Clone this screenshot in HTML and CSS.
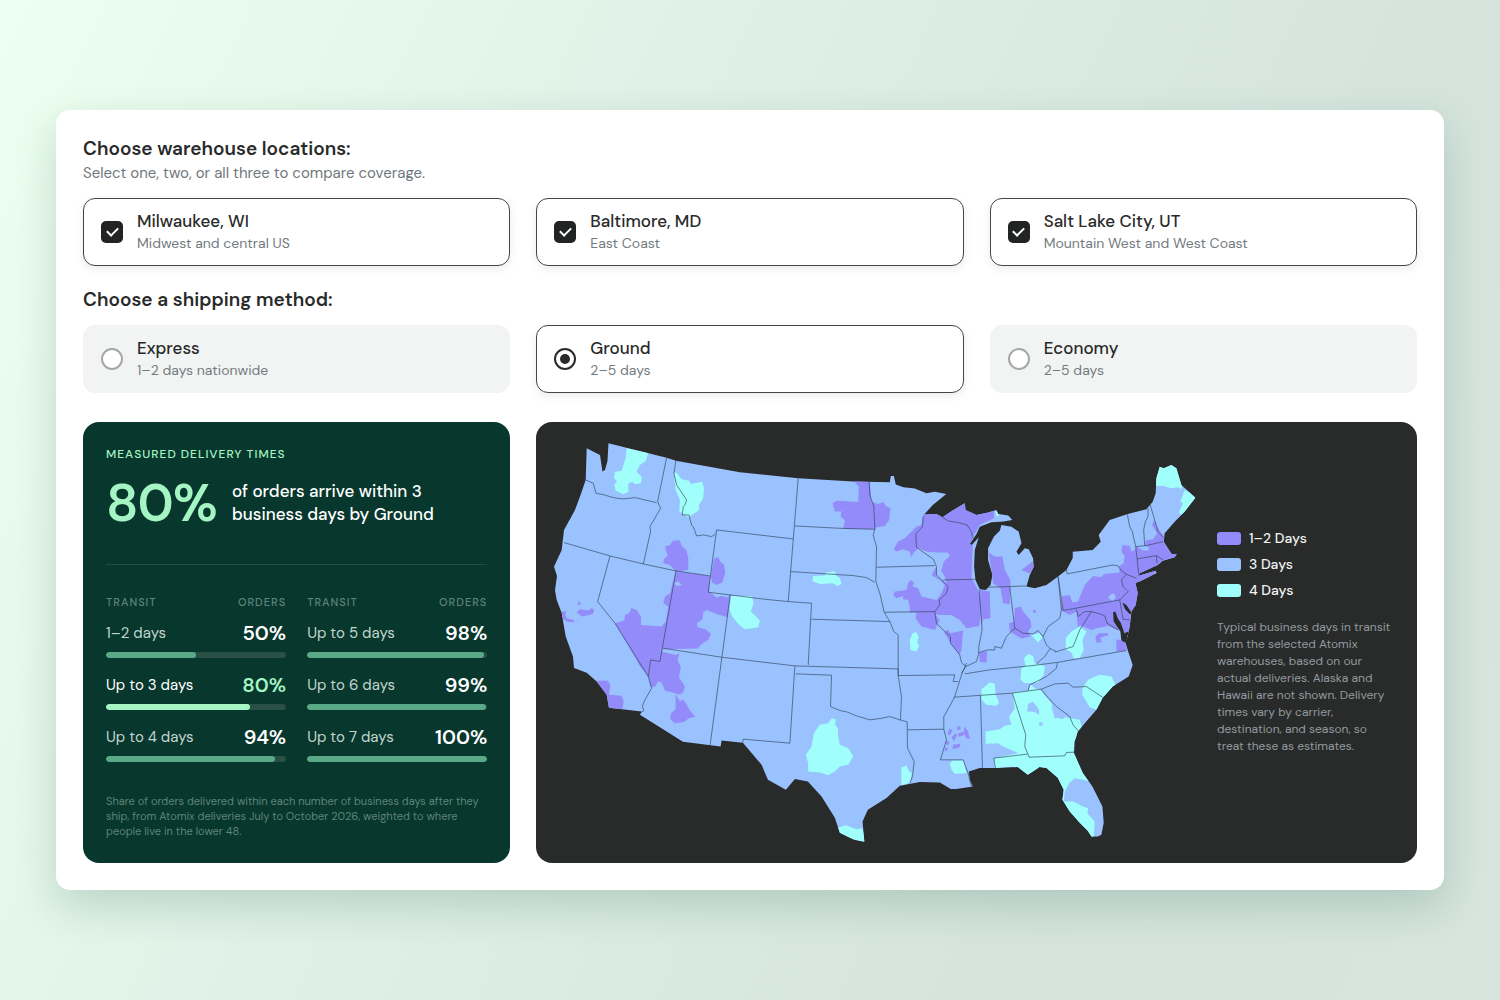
FILE: index.html
```html
<!DOCTYPE html>
<html lang="en">
<head>
<meta charset="utf-8">
<meta name="viewport" content="width=device-width, initial-scale=1">
<title>Delivery coverage</title>
<link rel="stylesheet" href="styles.css">
</head>
<body>
<main class="card">
  <fieldset class="group">
    <legend class="heading">Choose warehouse locations:</legend>
    <p class="hint">Select one, two, or all three to compare coverage.</p>
    <div class="options">
      <label class="option"><input class="control check" type="checkbox" checked><span class="option-text"><span class="name">Milwaukee, WI</span><span class="note">Midwest and central US</span></span></label>
      <label class="option"><input class="control check" type="checkbox" checked><span class="option-text"><span class="name">Baltimore, MD</span><span class="note">East Coast</span></span></label>
      <label class="option"><input class="control check" type="checkbox" checked><span class="option-text"><span class="name">Salt Lake City, UT</span><span class="note">Mountain West and West Coast</span></span></label>
    </div>
  </fieldset>
  <fieldset class="group methods">
    <legend class="heading">Choose a shipping method:</legend>
    <div class="options">
      <label class="option"><input class="control radio" type="radio" name="method"><span class="option-text"><span class="name">Express</span><span class="note">1–2 days nationwide</span></span></label>
      <label class="option"><input class="control radio" type="radio" name="method" checked><span class="option-text"><span class="name">Ground</span><span class="note">2–5 days</span></span></label>
      <label class="option"><input class="control radio" type="radio" name="method"><span class="option-text"><span class="name">Economy</span><span class="note">2–5 days</span></span></label>
    </div>
  </fieldset>
  <div class="results">
    <section class="stats">
      <h2 class="eyebrow">MEASURED DELIVERY TIMES</h2>
      <div class="hero"><strong class="big">80%</strong><p class="summary">of orders arrive within 3<br>business days by Ground</p></div>
      <div class="tables">
        <table class="times">
          <thead><tr><th>TRANSIT</th><th>ORDERS</th></tr></thead>
          <tbody>
            <tr><td>1–2 days</td><td>50%</td></tr>
            <tr class="bar-row"><td colspan="2"><div class="track"><div class="fill" style="width:50%"></div></div></td></tr>
            <tr class="best"><td>Up to 3 days</td><td>80%</td></tr>
            <tr class="bar-row best"><td colspan="2"><div class="track"><div class="fill" style="width:80%"></div></div></td></tr>
            <tr><td>Up to 4 days</td><td>94%</td></tr>
            <tr class="bar-row"><td colspan="2"><div class="track"><div class="fill" style="width:94%"></div></div></td></tr>
          </tbody>
        </table>
        <table class="times">
          <thead><tr><th>TRANSIT</th><th>ORDERS</th></tr></thead>
          <tbody>
            <tr><td>Up to 5 days</td><td>98%</td></tr>
            <tr class="bar-row"><td colspan="2"><div class="track"><div class="fill" style="width:98%"></div></div></td></tr>
            <tr><td>Up to 6 days</td><td>99%</td></tr>
            <tr class="bar-row"><td colspan="2"><div class="track"><div class="fill" style="width:99%"></div></div></td></tr>
            <tr><td>Up to 7 days</td><td>100%</td></tr>
            <tr class="bar-row"><td colspan="2"><div class="track"><div class="fill" style="width:100%"></div></div></td></tr>
          </tbody>
        </table>
      </div>
      <p class="source">Share of orders delivered within each number of business days after they ship, from Atomix deliveries July to October 2026, weighted to where people live in the lower 48.</p>
    </section>
    <section class="coverage">
      <svg class="map" viewBox="0 0 1980 1260" role="img" aria-label="Delivery days by region">
        <defs>
          <path id="usa" transform="scale(3) translate(-545 -430)" d="M586.7 448.3 600 455 602.5 471.5 605 470 607.5 461 608.5 443.3 666.7 457.7 676 460.7 740 472.3 798.3 478.3 853.3 481.5 890 482.3 891 476H894L896 484.5 903.5 487.3 915 488.5 926.7 493.3 935 491.7 946.5 494 933 505 924.3 514.5 936.7 514 942.7 517.3 952 511 965 503.3 965.7 510 976.7 515 988.5 512.5 996.7 510 998.5 514 1008.5 515.5 1012.5 520 1003.5 521.5 991.7 522.3 980 526.7 976.7 534 970 544 972 545 979 537.3 975 550 974.3 566.7 975.7 580 980 589.3 986 590 990.7 585 992.7 575 988.3 560 988.3 548.3 994 536.7 1000 530.7 1001.7 525 1011.7 526.7 1019 531.7 1021.7 543.3 1016.7 551.7 1019 555 1025 548.3 1029 549.3 1033.3 558.3 1034 566.7 1030 575 1026.7 586.7 1035 588.3 1046.7 585 1058.3 576.7 1066.7 570 1073 558 1073 551.7 1093 550 1101 541.7 1099 535 1110 520 1128 514 1146.7 509.3 1153 501.7 1156 493.3 1156.7 478.3 1160 466.7 1164 468.3 1171.7 465 1176.7 468.3 1181.7 485 1195.7 497.7 1185 511.7 1175 521.7 1165 533.3 1164 541.7 1168 548 1172 554H1177L1175 557.3 1163 560.7 1158 565 1140 573.3 1138 576 1156 570.7 1157 573 1140 581.7 1135.7 583 1138 593 1136 605 1131.7 611.7 1130 626.7 1127 640 1125 640 1128 650 1133 665 1129 676.7 1113 686.7 1103 698 1096.7 710 1078 731.7 1075 741.7 1074.3 753.3 1083 773.3 1092.7 786.7 1102.7 806.7 1104 823 1101.7 835 1098 836.7 1091.7 836.7 1088 831 1080 823 1070 811.7 1062.7 800 1064 790 1058 778 1046.7 768.3 1040 767.3 1028 775 1018 767.3 995 768.3 980 768.3 969 771.7 970 780 973 786.7 956.7 789.3 951 789.3 940 782.7 920 782.3 900 786 886.7 798.3 868 810 862.7 821.7 864.5 842 854 840 840 833 835 818 821.7 796.7 808 781.7 795 779.3 786 790 768 780 761.7 765 743 743 721.7 740.7 720.7 746.7 683 742 640 715 641.7 711.7 609 708 606.7 695 596.7 681.7 586.7 673 574 668 573 656.7 565.7 636.7 561.7 613 556.7 600 555 590 557 576 554 566.7 561.7 550 564 530 575 510 581.7 491.7 585.7 480Z"/>
          <clipPath id="land"><use href="#usa"/></clipPath>
        </defs>
        <use href="#usa" class="three"/>
        <g clip-path="url(#land)">
          <g class="two">
            <!-- mountain states -->
            <path d="M360 350 375 345 385 332 405 332 410 348 424 360 430 385 430 420 393 425 375 405 356 400 356 388 368 378ZM508 385 520 382 528 398 537 402 541 430 532 458 515 465 502 458 497 438ZM393 423 495 438 493 487 556 495 548 562 515 552 485 540 475 548 472 568 456 580 458 592 482 598 498 612 490 630 470 642 458 656 355 658 350 665 392 675 403 670 398 692 408 712 402 742 420 770 415 788 405 794 390 790 360 782 350 758 340 755 330 770 318 772 310 740 282 705 275 690 210 580 238 572 240 555 252 550 260 534 275 540 288 560 288 585 350 590 363 575 370 530 355 520 360 500 375 490ZM392 792 405 815 414 808 424 822 435 842 451 860 430 866 420 876 390 880 376 868 378 850 392 838ZM155 753 188 752 196 765 192 795 230 798 236 815 232 840 180 840ZM95 548 105 538 130 542 140 534 148 540 143 552 112 560ZM50 545 65 545 60 555 65 565 85 570 88 578 65 575 52 565ZM100 514 107 520 104 527 98 524Z"/>
            <!-- northern plains and upper midwest -->
            <path transform="translate(585 60)" d="M340 90 390 95 395 155 415 162 430 156 438 168 452 175 448 210 435 228 410 232 405 238 310 237 315 210 302 200 305 185 285 185 278 160 290 152 355 156 357 110ZM530 230 545 225 550 195 600 170 680 120 765 150 762 205 720 225 700 260 695 385 715 420 725 455 722 500 718 528 680 535 660 510 635 495 600 495 585 492 600 510 585 540 545 530 527 505 530 488 510 488 510 470 505 450 490 448 490 438 470 445 460 435 465 425 500 420 505 400 512 390 523 398 518 410 535 415 545 440 590 450 605 430 615 405 600 390 575 375 590 350 590 380 620 400 615 380 590 340 590 308 560 305 535 295 520 310 514 322 510 305 490 298 470 305 462 298 475 275 495 265Z"/>
            <path transform="translate(1005 90)" d="M300 390 330 395 332 475 310 478 305 498ZM192 515 205 510 212 520 250 512 245 570 240 585 212 550ZM298 578 322 574 320 608 300 606ZM326 278 345 290 368 290 375 330 392 360 390 432 370 430 362 385 340 370 335 330ZM425 330 458 305 462 325 448 340ZM405 445 422 440 430 455 452 480 455 500 445 515 452 530 425 536 390 515 388 490 403 485ZM460 450h7v8h-7Z"/>
            <!-- northeast -->
            <path transform="translate(1455 60)" d="M95 482 97 438 120 436 128 458 145 455 165 405 190 378 215 382 222 372 270 368 268 350 282 340 285 318 275 305 278 285 300 288 305 305 315 300 320 290 345 300 357 292 345 288 348 272 370 268 382 250 367 225 373 210 385 235 402 260 450 310 440 335 385 360 340 400 330 450 310 500 300 535 288 570 275 520 265 540 235 528 200 535 185 540 150 525 145 535 140 485 120 495ZM197 560 208 550 235 550 235 557 212 562 215 578 200 578ZM260 568 285 575 292 602 260 605ZM12 482h6v6h-6Z"/>
            <!-- lower Mississippi -->
            <path transform="translate(585 630)" d="M652 260h10v10h-10ZM673 260 685 275 690 298 680 295 672 280ZM655 280l18-4-3 12-14 3ZM630 265l8 8-8 14-7-5ZM635 292 648 280 652 286 642 304ZM622 302l8 6-6 8-8-6ZM618 322l7 3-5 10-6-4ZM640 315 662 312 660 322 638 328Z"/>
          </g>
          <g class="three">
            <path d="M387 460 400 454 411 465 395 468ZM490 483 556 494 548 503 530 498 515 503Z"/>
            <path transform="translate(585 60)" d="M582 308 625 308 630 318 612 335 605 360 592 375 588 345Z"/>
            <path transform="translate(1455 60)" d="M240 435 252 430 259 440 250 454 236 444ZM325 292 357 290 357 302 340 302Z"/>
          </g>
          <g class="four">
            <path d="M245 55 310 68 303 92 285 105 275 125 290 140 288 160 270 163 262 155 250 160 250 185 235 193 212 182 208 162 217 155 207 145 210 125 230 122 242 85ZM387 128 395 128 410 148 432 152 438 162 472 155 477 175 475 205 462 225 463 240 430 262 412 250 403 245 405 210 392 180ZM558 498 600 498 622 500 626 520 618 545 645 572 640 592 600 598 580 582 562 560 554 540Z"/>
            <path transform="translate(585 60)" d="M220 378 255 377 258 368 285 364 290 378 300 385 305 402 292 408 280 400 240 402 218 394ZM518 550 530 546 537 562 532 575 538 588 530 605 512 600 510 572Z"/>
            <path transform="translate(585 630)" d="M275 235 288 238 286 255 294 265 295 290 300 315 325 325 340 350 325 375 300 380 285 395 265 406 240 398 205 395 205 370 198 345 215 320 222 280 240 255 265 250ZM288 565 318 556 350 568 368 565 378 610 300 585ZM485 382 500 378 508 395 516 400 510 428 485 438 484 405ZM630 370 640 362 670 362 680 400 645 402 635 390Z"/>
            <!-- southeast -->
            <path transform="translate(1185 570)" d="M218 218 300 208 335 250 345 295 375 292 392 295 420 300 428 330 403 365 402 400 470 490 430 480 405 475 388 490 375 515 372 545 400 545 430 560 445 565 443 580 465 605 462 655 440 655 340 540 300 440 265 480 220 440 165 445 162 415 235 400 190 380 175 370 138 372 137 335 180 328 195 318 215 315 208 290 225 265ZM125 208 150 188 165 192 168 225 178 248 170 258 140 255 125 240ZM428 205 445 180 480 165 515 170 525 190 530 200 490 250 470 270 450 262 440 245 428 225ZM378 55 395 35 420 20 440 35 428 60 432 90 420 115 402 115 395 98 378 88ZM272 195 292 210 265 215ZM245 145 258 138 252 115 265 102 280 108 285 130 315 138 312 165 295 188 255 190 242 180ZM275 45 300 40 308 52 295 68Z"/>
            <!-- northern Maine -->
            <path transform="translate(1455 60)" d="M370 107 400 108 425 115 445 112 455 118 470 40 360 30ZM465 120 510 140 455 195 447 188 460 160 452 155Z"/>
            <path transform="translate(1005 90)" d="M345 150 360 165 350 170Z"/>
          </g>
          <g class="three" transform="translate(1185 570)"><path d="M265 252 280 246 298 270 298 285 282 276 262 275ZM335 262 375 290 370 298 345 293ZM298 308 308 306 308 318 298 318Z"/></g>
          <g class="borders">
            <path d="M122 150 145 160 153 190 175 194 205 203 235 207 270 203 335 218M365 83 338 215 347 235 315 290 317 305 295 402M57 338 195 378 295 402 393 423 495 438M195 378 158 515 210 580 310 740M393 423 345 695 317 690 310 740 320 775 300 810 292 830 297 842 285 850M393 92 387 130 395 165 425 210 420 225 415 230 412 255 432 255 440 285 447 295 455 318 475 315 500 320 512 312M515 300 490 487 556 495 660 508 730 515 800 520M515 300 745 327M556 495 495 950M355 655 530 682 750 708 1060 717"/>
            <path transform="translate(585 60)" d="M175 85 145 455M165 228 300 235 405 238M388 95 390 135 402 170 405 238 400 255 410 290 408 395 420 430 433 487 450 515 462 545 475 555V677M153 365 340 377 380 383 405 397M215 508 450 515M215 460 205 645"/>
            <path transform="translate(585 630)" d="M165 78 150 310 10 298 8 310M168 102 275 106 272 200 300 212 320 216 350 228 390 240 420 236 450 230 480 240 502 246 503 325 523 365 518 410 510 430M475 87V107L485 170 482 240M503 270 612 268M475 107 645 105 640 125 655 125M680 70 665 105 645 170 632 195 612 230 612 268 620 300 602 360H670L685 400 695 440"/>
            <path transform="translate(1005 90)" d="M130 170 128 200 108 222 110 262 135 280 160 297 170 320V345L205 380 200 400 178 420 180 435 165 455 170 490 195 515 212 530V550L240 585 245 608 258 620M185 170 205 183 235 188 262 195 275 215 280 235M190 360 288 358M-10 322 165 317M15 457 165 455M298 390 307 510 297 560V580L290 605 258 620 245 640M325 382 440 378M390 380 405 505M297 578 325 570 345 570 345 560 365 565 380 530 405 505 430 520 460 522 475 512 490 530 500 555 512 567 530 575M535 350 545 450 540 475 505 500 490 530M512 565 495 590 470 612"/>
            <path transform="translate(1185 570)" d="M75 162 150 150 270 138 350 128 560 92M42 232 215 220 305 208M353 128 350 145 320 170 270 195 265 212M305 208 345 192 385 190 400 202 440 200 490 233M305 208 320 228 350 260 390 290 400 315 415 333M122 228 128 445M218 220 258 345 255 380 268 412 375 408 380 398 403 397M262 403 162 415 167 445"/>
            <path transform="translate(1455 60)" d="M110 360 112 372 250 345 265 348 275 362 290 373 275 390 280 410 295 425 270 450 100 482 85 380M290 373 320 385M293 193 300 230 308 245 318 290 322 325 327 372M318 290 350 287 400 275M322 327 380 317 400 330M380 317 382 340M355 175 355 200 347 215 342 240 345 287M360 160 372 200 385 245 400 262M140 478 145 500 165 485 185 485 210 492 225 498 232 520 265 540M270 450 280 508 300 510M185 485 150 540 130 590 75 607"/>
          </g>
          <path class="water" transform="translate(1455 60)" d="M250 488 257 485 264 505 274 520 284 550 296 545 290 580 275 572 272 545 252 515ZM278 458 290 465 308 492 300 492 286 478Z"/>
        </g>
      </svg>
      <aside class="key">
        <ul class="levels">
          <li class="level"><span class="swatch fast"></span>1–2 Days</li>
          <li class="level"><span class="swatch medium"></span>3 Days</li>
          <li class="level"><span class="swatch slow"></span>4 Days</li>
        </ul>
        <p class="disclaimer">Typical business days in transit from the selected Atomix warehouses, based on our actual deliveries. Alaska and Hawaii are not shown. Delivery times vary by carrier, destination, and season, so treat these as estimates.</p>
      </aside>
    </section>
  </div>
</main>
</body>
</html>
```
FILE: styles.css
```css
* { box-sizing: border-box; }
body {
  margin: 0;
  min-height: 100vh;
  padding: 56px;
  display: flex;
  align-items: center;
  background: linear-gradient(115deg, #edfff0 0%, #e0f1e7 35%, #d4e4dd 75%, #d6e5de 100%);
  color: #292a2a;
  font-family: "DM Sans", Inter, sans-serif;
}
p, h2, ul { margin: 0; padding: 0; }
.card {
  flex: 1;
  min-width: 0;
  padding: 27px;
  border-radius: 14px;
  background: #fff;
  box-shadow: 0 16px 40px rgba(30, 90, 65, .2);
}
.group { margin: 0; padding: 0; border: 0; min-width: 0; }
.methods { margin-top: 22px; }
.heading { display: block; padding: 0; font-size: 19px; font-weight: 600; line-height: 24px; }
.hint { color: #6f777c; font-size: 15px; line-height: 24px; }
.options { display: grid; grid-template-columns: repeat(3, 1fr); gap: 26px; margin-top: 13px; }
.option {
  display: flex;
  align-items: center;
  gap: 14px;
  height: 68px;
  padding: 0 17px;
  border: 1px solid #f2f4f3;
  border-radius: 12px;
  background: #f2f4f3;
}
.option:has(:checked) { border-color: #444546; background: #fff; box-shadow: 0 3px 10px rgba(0, 0, 0, .08); }
.option-text { display: flex; flex-direction: column; }
.name { font-size: 17px; font-weight: 500; line-height: 23px; }
.note { color: #747b80; font-size: 14px; line-height: 21px; }
.control { appearance: none; flex: none; width: 22px; height: 22px; margin: 0; display: grid; place-items: center; }
.check { border-radius: 5px; background: #222423; }
.check:checked::before { content: ""; width: 9px; height: 5px; margin-bottom: 3px; border: solid #fff; border-width: 0 0 2px 2px; transform: rotate(-45deg); }
.radio { border: 2px solid #a5a8a9; border-radius: 50%; background: #fff; }
.radio:checked { border-color: #292a2a; }
.radio:checked::before { content: ""; width: 10px; height: 10px; border-radius: 50%; background: #292a2a; }
.results { display: grid; grid-template-columns: repeat(3, 1fr); gap: 26px; margin-top: 29px; }
.stats { padding: 24px 23px; border-radius: 16px; background: #07372d; color: #fff; }
.eyebrow { color: #a4f4c4; font-size: 12px; font-weight: 500; line-height: 16px; letter-spacing: 1px; }
.hero { display: flex; align-items: center; gap: 15px; margin-top: 18px; padding-bottom: 38px; border-bottom: 1px solid #1f4e42; }
.big { color: #a4f4c4; font-size: 52px; font-weight: 600; line-height: 46px; letter-spacing: -1px; }
.summary { font-size: 17px; font-weight: 500; line-height: 23px; white-space: nowrap; }
.tables { display: grid; grid-template-columns: 1fr 1fr; gap: 21px; margin-top: 29px; }
.times { width: 100%; border-collapse: collapse; }
.times th { height: 24px; padding: 0 0 8px; color: #5f8479; font-size: 11px; font-weight: 500; line-height: 16px; letter-spacing: 1px; text-align: left; }
.times td { height: 30px; padding: 0; color: #c2d6ce; font-size: 15px; line-height: 30px; }
.times th:last-child { text-align: right; }
.times td:nth-child(2) { color: #fff; font-size: 20px; font-weight: 600; text-align: right; }
.times .best td { color: #fff; }
.times .best td:nth-child(2) { color: #a4f4c4; }
.times .bar-row td { height: 22px; padding: 4px 0 12px; line-height: 6px; }
.track { height: 6px; border-radius: 3px; background: #2a4f46; overflow: hidden; }
.fill { height: 6px; border-radius: 3px; background: #5aa987; }
.best .fill { background: #a4f4c4; }
.source { margin-top: 20px; color: #5f8479; font-size: 11px; line-height: 15px; }
.coverage {
  grid-column: span 2;
  display: grid;
  grid-template-columns: 1fr 176px;
  align-items: center;
  gap: 12px;
  padding: 8px 24px 8px 9px;
  border-radius: 16px;
  background: #292a2a;
}
.map { display: block; width: 100%; align-self: start; }
.two { fill: #928bf9; }
.three { fill: #9ac2fe; }
.four { fill: #a0fffa; }
.water { fill: #292a2a; }
.borders { fill: none; stroke: #34485f; stroke-width: 2; stroke-linejoin: round; }
.levels { display: grid; gap: 10px; list-style: none; }
.level { display: flex; align-items: center; gap: 8px; color: #f0f1f1; font-size: 14px; font-weight: 500; line-height: 16px; }
.swatch { width: 24px; height: 13px; border-radius: 3px; }
.fast { background: #928bf9; }
.medium { background: #9ac2fe; }
.slow { background: #a0fffa; }
.disclaimer { margin-top: 21px; color: #929b9f; font-size: 12px; line-height: 17px; }
```
